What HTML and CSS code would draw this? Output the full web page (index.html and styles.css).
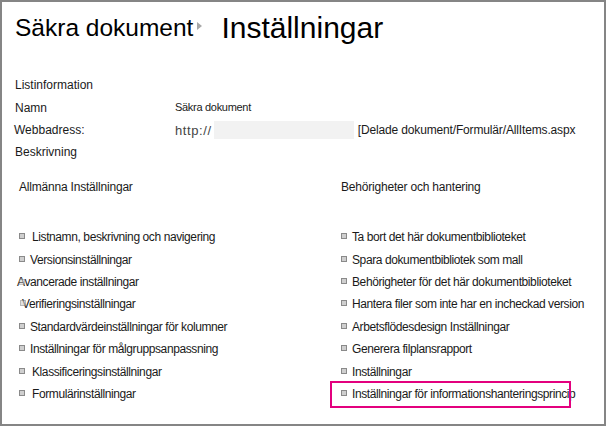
FILE: index.html
```html
<!DOCTYPE html>
<html lang="sv">
<head>
<meta charset="utf-8">
<link rel="stylesheet" href="styles.css">
</head>
<body>
<div class="frame">
  <div class="header">
    <span class="crumb">Säkra dokument</span>
    <span class="arrow"></span>
    <span class="title">Inställningar</span>
  </div>

  <div class="info">
    <div class="info-head">Listinformation</div>
    <div class="info-row"><span class="label">Namn</span><span class="value small">Säkra dokument</span></div>
    <div class="info-row"><span class="label shift">Webbadress:</span><span class="value"><span class="proto">http://</span><span class="masked"></span><span class="path">[Delade dokument/Formulär/AllItems.aspx</span></span></div>
    <div class="info-row"><span class="label">Beskrivning</span></div>
  </div>

  <div class="sections">
    <div class="col">
      <div class="sec-head">Allmänna Inställningar</div>
      <ul class="links">
        <li><span class="bullet"></span><span class="t1">Listnamn, beskrivning och navigering</span></li>
        <li><span class="bullet"></span>Versionsinställningar</li>
        <li class="over"><span class="bullet"></span>Avancerade inställningar</li>
        <li class="over2"><span class="bullet"></span>Verifieringsinställningar</li>
        <li><span class="bullet"></span>Standardvärdeinställningar för kolumner</li>
        <li><span class="bullet"></span>Inställningar för målgruppsanpassning</li>
        <li><span class="bullet"></span><span class="t1">Klassificeringsinställningar</span></li>
        <li><span class="bullet"></span><span class="t1">Formulärinställningar</span></li>
      </ul>
    </div>
    <div class="col right">
      <div class="sec-head">Behörigheter och hantering</div>
      <ul class="links">
        <li><span class="bullet"></span>Ta bort det här dokumentbiblioteket</li>
        <li><span class="bullet"></span>Spara dokumentbibliotek som mall</li>
        <li><span class="bullet"></span>Behörigheter för det här dokumentbiblioteket</li>
        <li><span class="bullet"></span>Hantera filer som inte har en incheckad version</li>
        <li><span class="bullet"></span>Arbetsflödesdesign Inställningar</li>
        <li><span class="bullet"></span>Generera filplansrapport</li>
        <li><span class="bullet"></span>Inställningar</li>
        <li class="hl"><span class="bullet"></span>Inställningar för informationshanteringsprincip</li>
      </ul>
    </div>
  </div>
</div>
</body>
</html>
```

FILE: styles.css
```css
* { box-sizing: border-box; }
html, body { margin: 0; padding: 0; background: #fff; }
body {
  font-family: "Liberation Sans", Arial, sans-serif;
  color: #1a1a1a;
}
.frame {
  width: 606px;
  height: 426px;
  border: 2px solid #858585;
  position: relative;
  overflow: hidden;
}
.header {
  display: flex;
  align-items: baseline;
  padding: 9px 0 0 13px;
  height: 62px;
}
.crumb {
  font-size: 24.5px;
  color: #000;
  position: relative;
  top: -2px;
}
.arrow {
  display: inline-block;
  width: 0; height: 0;
  border-left: 5px solid #a8a8a8;
  border-top: 4px solid transparent;
  border-bottom: 4px solid transparent;
  margin: 0 19px 0 4px;
  position: relative;
  top: -8px;
}
.title {
  font-size: 30px;
  color: #000;
}
.info {
  padding-left: 13px;
  font-size: 12px;
}
.info-head {
  height: 22px;
  line-height: 22px;
  margin-top: 10px;
  margin-bottom: 1px;
}
.info-row {
  display: flex;
  height: 22px;
  align-items: center;
}
.label { width: 160px; flex: none; }
.label.shift { margin-left: -1px; width: 161px; }
.value { display: flex; align-items: center; }
.small { font-size: 11px; letter-spacing: -0.3px; position: relative; top: -1px; }
.proto { color: #444; font-size: 13px; letter-spacing: 0.6px; }
.masked {
  display: inline-block;
  width: 140px;
  height: 18px;
  background: #f2f2f2;
  margin: 0 4px 0 2px;
}
.path { letter-spacing: -0.15px; }
.sections {
  display: grid;
  grid-template-columns: 322px 1fr;
  padding-left: 17px;
  margin-top: 13px;
  font-size: 12px;
}
.sec-head {
  height: 22px;
  line-height: 22px;
  letter-spacing: -0.2px;
}
.links {
  list-style: none;
  margin: 28px 0 0 0;
  padding: 0;
}
.links li {
  display: flex;
  align-items: center;
  height: 22.4px;
  letter-spacing: -0.4px;
  position: relative;
}
.bullet {
  display: inline-block;
  width: 6px; height: 6px;
  background: #cfcfcf;
  border: 1px solid #8a8a8a;
  margin: 0 5px 0 0;
  flex: none;
  position: relative;
  top: -1px;
}
.t1 { margin-left: 2px; }
.links li.over .bullet { position: absolute; left: 2px; top: 8px; margin: 0; opacity: 0.5; }
.links li.over { padding-left: 0; margin-left: -2px; }
.links li.over2 .bullet { position: absolute; left: 1px; top: 7px; margin: 0; opacity: 0.6; }
.links li.over2 { padding-left: 3px; }
.hl::after {
  content: "";
  position: absolute;
  left: -11px;
  top: -2px;
  width: 237px;
  height: 23px;
  border: 2px solid #e3007e;
}
```
